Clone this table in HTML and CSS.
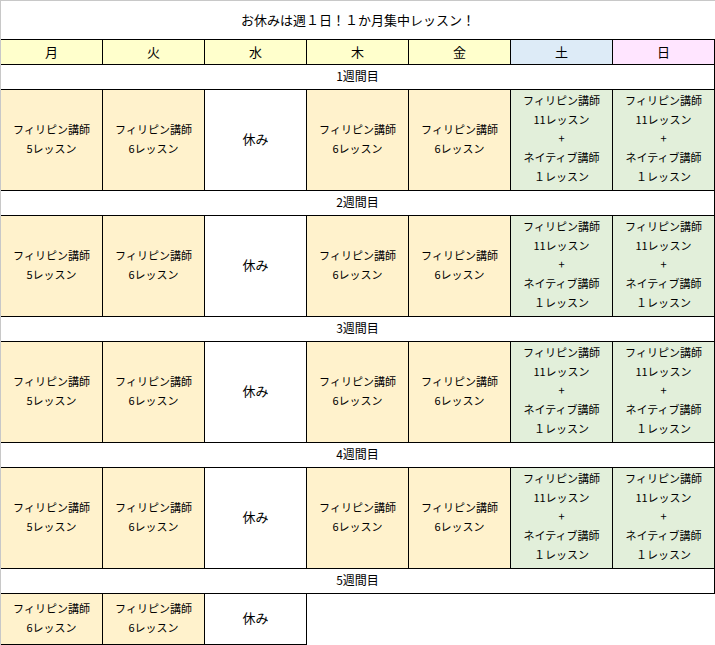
FILE: index.html
```html
<!DOCTYPE html>
<html lang="ja">
<head>
<meta charset="utf-8">
<link rel="stylesheet" href="styles.css">
</head>
<body>
<div class="frame">
  <div class="sheet">
    <div class="title">お休みは週１日！１か月集中レッスン！</div>

    <div class="cell head">月</div>
    <div class="cell head">火</div>
    <div class="cell head">水</div>
    <div class="cell head">木</div>
    <div class="cell head">金</div>
    <div class="cell head sat">土</div>
    <div class="cell head sun">日</div>

    <div class="cell week">1週間目</div>
    <div class="cell day ph">フィリピン講師<br>5レッスン</div>
    <div class="cell day ph">フィリピン講師<br>6レッスン</div>
    <div class="cell day off">休み</div>
    <div class="cell day ph">フィリピン講師<br>6レッスン</div>
    <div class="cell day ph">フィリピン講師<br>6レッスン</div>
    <div class="cell day we">フィリピン講師<br>11レッスン<br>+<br>ネイティブ講師<br>１レッスン</div>
    <div class="cell day we">フィリピン講師<br>11レッスン<br>+<br>ネイティブ講師<br>１レッスン</div>

    <div class="cell week">2週間目</div>
    <div class="cell day ph">フィリピン講師<br>5レッスン</div>
    <div class="cell day ph">フィリピン講師<br>6レッスン</div>
    <div class="cell day off">休み</div>
    <div class="cell day ph">フィリピン講師<br>6レッスン</div>
    <div class="cell day ph">フィリピン講師<br>6レッスン</div>
    <div class="cell day we">フィリピン講師<br>11レッスン<br>+<br>ネイティブ講師<br>１レッスン</div>
    <div class="cell day we">フィリピン講師<br>11レッスン<br>+<br>ネイティブ講師<br>１レッスン</div>

    <div class="cell week">3週間目</div>
    <div class="cell day ph">フィリピン講師<br>5レッスン</div>
    <div class="cell day ph">フィリピン講師<br>6レッスン</div>
    <div class="cell day off">休み</div>
    <div class="cell day ph">フィリピン講師<br>6レッスン</div>
    <div class="cell day ph">フィリピン講師<br>6レッスン</div>
    <div class="cell day we">フィリピン講師<br>11レッスン<br>+<br>ネイティブ講師<br>１レッスン</div>
    <div class="cell day we">フィリピン講師<br>11レッスン<br>+<br>ネイティブ講師<br>１レッスン</div>

    <div class="cell week">4週間目</div>
    <div class="cell day ph">フィリピン講師<br>5レッスン</div>
    <div class="cell day ph">フィリピン講師<br>6レッスン</div>
    <div class="cell day off">休み</div>
    <div class="cell day ph">フィリピン講師<br>6レッスン</div>
    <div class="cell day ph">フィリピン講師<br>6レッスン</div>
    <div class="cell day we">フィリピン講師<br>11レッスン<br>+<br>ネイティブ講師<br>１レッスン</div>
    <div class="cell day we">フィリピン講師<br>11レッスン<br>+<br>ネイティブ講師<br>１レッスン</div>

    <div class="cell week">5週間目</div>
    <div class="cell last ph">フィリピン講師<br>6レッスン</div>
    <div class="cell last ph">フィリピン講師<br>6レッスン</div>
    <div class="cell last off">休み</div>
  </div>
</div>
</body>
</html>
```

FILE: styles.css
```css
html, body {
  margin: 0;
  padding: 0;
  background: #ffffff;
}

body {
  font-family: "Noto Sans CJK JP", "Noto Sans", sans-serif;
  font-size: 11px;
  color: #000000;
}

.frame {
  width: 714px;
  height: 644px;
  border-top: 1px solid #c8c8c8;
  border-left: 1px solid #c8c8c8;
  overflow: hidden;
}

.sheet {
  display: grid;
  grid-template-columns: repeat(7, 102px);
  grid-auto-rows: auto;
}

.title {
  grid-column: 1 / -1;
  box-sizing: border-box;
  height: 39px;
  padding-bottom: 2px;
  border-bottom: 1px solid #000;
  display: flex;
  align-items: center;
  justify-content: center;
  font-size: 13px;
}

.cell {
  box-sizing: border-box;
  border-right: 1px solid #000;
  border-bottom: 1px solid #000;
  display: flex;
  align-items: center;
  justify-content: center;
  text-align: center;
  line-height: 19px;
  padding-bottom: 3px;
}

.head {
  height: 25px;
  background: #ffffcc;
  font-size: 13px;
  padding-bottom: 2px;
}

.head.sat { background: #ddebf7; }
.head.sun { background: #ffe5ff; }

.week {
  grid-column: 1 / -1;
  height: 25px;
  background: #ffffff;
  font-size: 12px;
}

.day {
  height: 101px;
}

.last {
  height: 51px;
}

.ph { background: #fff2cc; }
.we { background: #e2efda; }
.off { background: #ffffff; font-size: 13px; }
```
